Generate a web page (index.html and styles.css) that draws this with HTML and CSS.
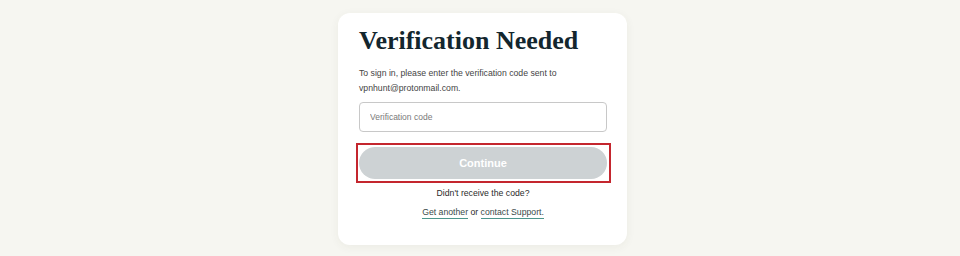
FILE: index.html
```html
<!DOCTYPE html>
<html lang="en">
<head>
<meta charset="UTF-8" />
<meta name="viewport" content="width=device-width, initial-scale=1.0" />
<title>Verification Needed</title>
<link rel="stylesheet" href="styles.css">
</head>
<body>
  <div class="card">
    <h1 class="title">Verification Needed</h1>
    <p class="intro">To sign in, please enter the verification code sent to vpnhunt@protonmail.com.</p>
    <input type="text" class="code-input" placeholder="Verification code" />
    <div class="highlight">
      <button class="continue" disabled>Continue</button>
    </div>
    <p class="resend">Didn't receive the code?</p>
    <p class="links"><a href="#">Get another</a> or <a href="#">contact Support.</a></p>
  </div>
</body>
</html>
```

FILE: styles.css
```css
* { box-sizing: border-box; }
body {
  margin: 0;
  height: 256px;
  background: #f6f6f1;
  font-family: "Liberation Sans", Arial, sans-serif;
  overflow: hidden;
}
.card {
  width: 289px;
  height: 232px;
  margin: 13px 0 0 338px;
  padding: 13px 20px 0 21px;
  background: #fff;
  border-radius: 12px;
  box-shadow: 0 2px 10px rgba(60, 60, 40, 0.06);
}
.title {
  margin: 0;
  font-family: "Liberation Serif", "Times New Roman", serif;
  font-size: 26px;
  line-height: 30px;
  font-weight: bold;
  color: #13262e;
}
.intro {
  margin: 10px 0 0;
  font-size: 8.7px;
  line-height: 15px;
  color: #444;
}
.code-input {
  display: block;
  width: 100%;
  height: 30px;
  margin-top: 6px;
  padding: 0 10px;
  border: 1px solid #c8c8c8;
  border-radius: 4px;
  font-family: inherit;
  font-size: 8.5px;
  color: #333;
}
.code-input::placeholder { color: #7a7a7a; }
.highlight {
  margin: 11px -4px 0 -3px;
  padding: 2px 2px 2px 1px;
  border: 2px solid #c4262e;
}
.continue {
  display: block;
  width: 100%;
  height: 32px;
  border: none;
  border-radius: 16px;
  background: #cdd2d4;
  color: #fff;
  font-family: inherit;
  font-size: 11px;
  font-weight: bold;
}
.resend {
  margin: 4px 0 0;
  text-align: center;
  font-size: 8.7px;
  line-height: 12px;
  color: #2a2a2a;
}
.links {
  margin: 7px 0 0;
  text-align: center;
  font-size: 8.7px;
  line-height: 12px;
  color: #2a2a2a;
}
.links a {
  color: #3b4b4a;
  text-decoration: none;
  border-bottom: 1.5px solid #4c958c;
  padding-bottom: 1px;
}
```
